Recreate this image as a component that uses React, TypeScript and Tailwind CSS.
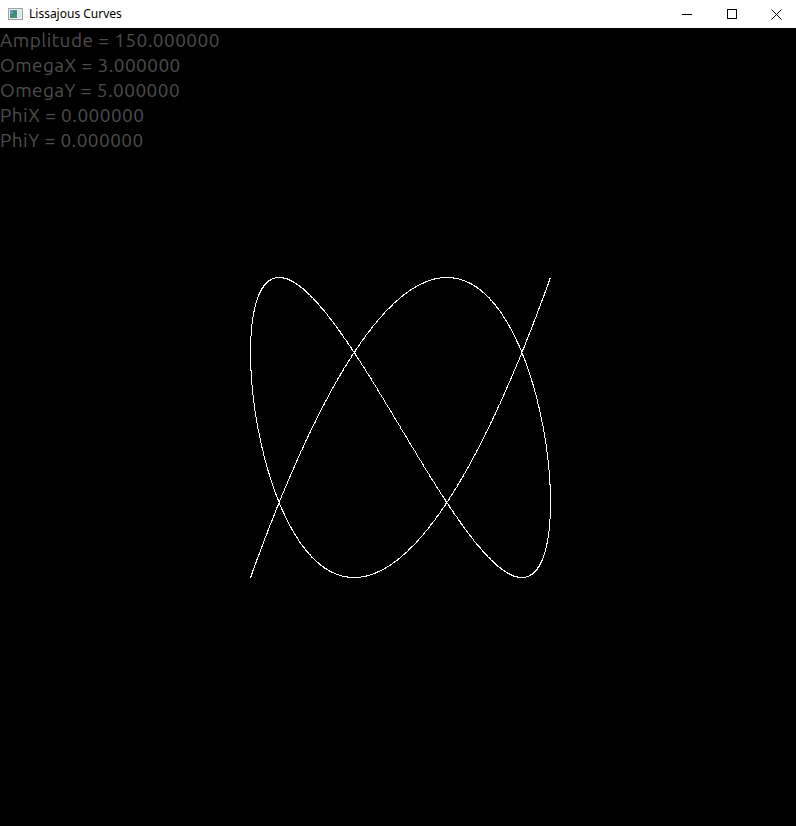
import React from "react";

const A = 150;
const WX = 3;
const WY = 5;
const CX = 400;
const CY = 399;

function curvePoints() {
  const pts: string[] = [];
  const n = 3000;
  for (let i = 0; i <= n; i++) {
    const t = (Math.PI * i) / n;
    const x = CX + A * Math.cos(WX * t);
    const y = CY - A * Math.cos(WY * t);
    pts.push(`${(Math.round(x) + 0.5).toFixed(1)},${(Math.round(y) + 0.5).toFixed(1)}`);
  }
  return pts.join(" ");
}

const lines = [
  "Amplitude = 150.000000",
  "OmegaX = 3.000000",
  "OmegaY = 5.000000",
  "PhiX = 0.000000",
  "PhiY = 0.000000",
];

export default function App() {
  return (
    <div className="w-[796px] h-[826px] flex flex-col bg-black overflow-hidden">
      {/* title bar */}
      <div className="h-[28px] bg-white flex items-center shrink-0">
        <svg width="16" height="16" viewBox="0 0 16 16" className="ml-[7px]">
          <rect x="1.5" y="2.5" width="14" height="11" fill="#f0f0f0" stroke="#a0a0a0" />
          <rect x="3" y="4" width="7" height="8" fill="#3f8f7f" />
          <rect x="3" y="4" width="3" height="4" fill="#5aa0c8" />
          <rect x="11" y="4" width="3" height="8" fill="#d8e2ea" />
        </svg>
        <span className="ml-[6px] text-[12px] text-black font-['Segoe_UI','Noto_Sans',sans-serif]">
          Lissajous Curves
        </span>
        <div className="ml-auto -mr-[3px] flex h-full">
          <div className="w-[45px] h-full flex items-center justify-center">
            <svg width="10" height="10" viewBox="0 0 10 10">
              <path d="M0 5.5H10" stroke="#000" strokeWidth="1" />
            </svg>
          </div>
          <div className="w-[45px] h-full flex items-center justify-center">
            <svg width="10" height="10" viewBox="0 0 10 10">
              <rect x="0.5" y="0.5" width="9" height="9" fill="none" stroke="#000" strokeWidth="1" />
            </svg>
          </div>
          <div className="w-[45px] h-full flex items-center justify-center">
            <svg width="11" height="11" viewBox="0 0 11 11">
              <path d="M0.5 0.5L10.5 10.5M10.5 0.5L0.5 10.5" stroke="#000" strokeWidth="1" />
            </svg>
          </div>
        </div>
      </div>

      {/* canvas */}
      <div className="relative flex-1">
        <svg className="absolute inset-0" width="796" height="798" shapeRendering="crispEdges">
          <polyline points={curvePoints()} fill="none" stroke="#fff" strokeWidth="1" />
        </svg>
        <div className="relative flex flex-col text-[19px] leading-[25px] tracking-[0.45px] text-[#4d4d4d] font-['Ubuntu','Open_Sans',sans-serif]">
          {lines.map((l) => (
            <div key={l}>{l}</div>
          ))}
        </div>
      </div>
    </div>
  );
}
